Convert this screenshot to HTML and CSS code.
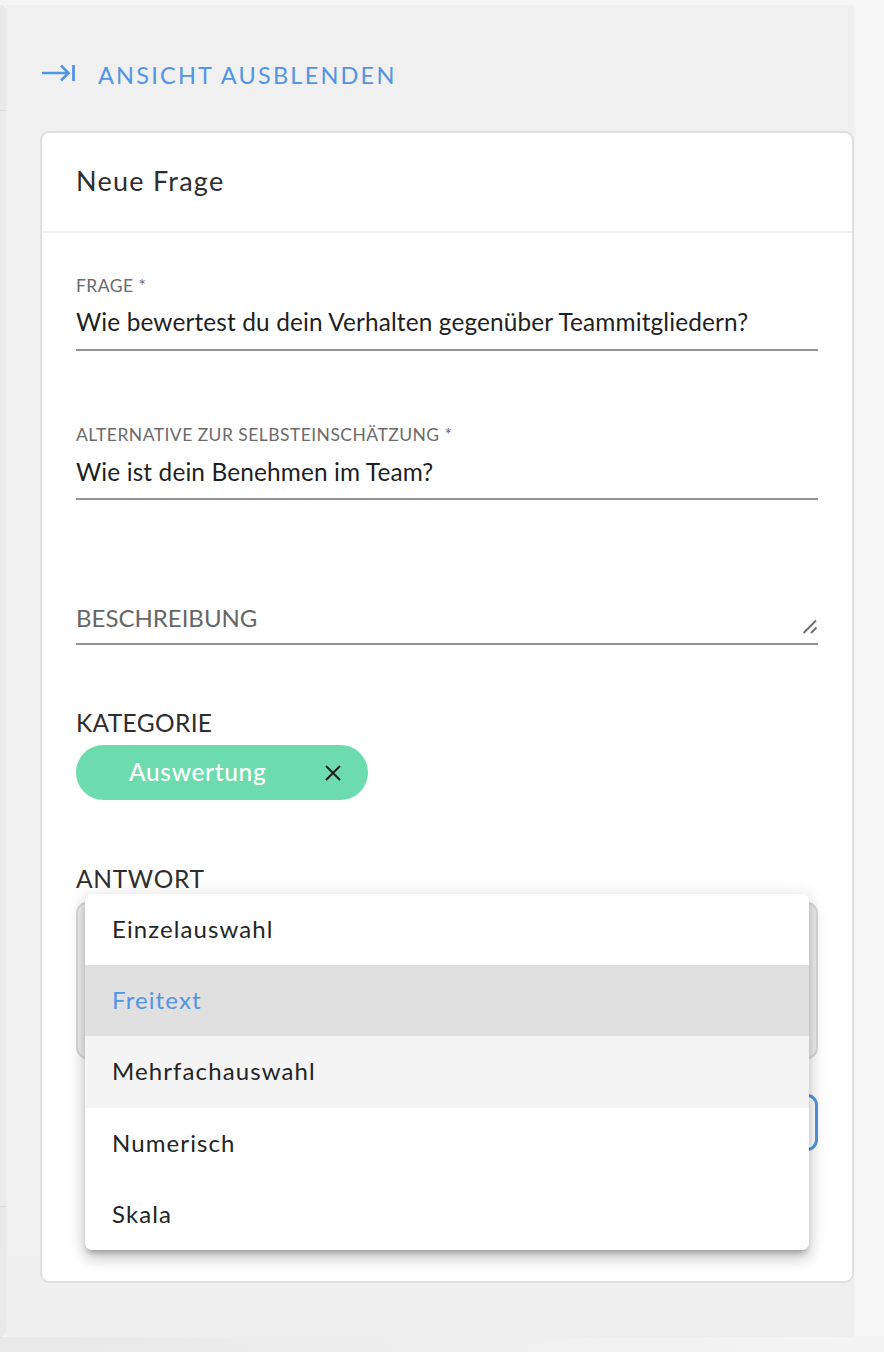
FILE: index.html
```html
<!DOCTYPE html>
<html lang="de">
<head>
<meta charset="utf-8">
<title>Neue Frage</title>
<link rel="stylesheet" href="styles.css">
</head>
<body>
<div class="page">
  <div class="sliver"><div class="sliver-top"></div><div class="sliver-mid"></div><div class="sliver-bot"></div></div>
  <main class="panel">
    <button class="hide-btn" type="button">
      <svg class="hide-icon" width="34" height="20" viewBox="0 0 34 20" fill="none" stroke="#5294e6" stroke-width="2.5"><path d="M1 10H27.5M20 2.5L27.5 10L20 17.5"/><path d="M32.5 2V18" stroke-width="2.8"/></svg>
      <span>ANSICHT AUSBLENDEN</span>
    </button>
    <section class="card">
      <header class="card-head">Neue Frage</header>
      <div class="card-body">
        <div class="field first">
          <label class="small-label">FRAGE *</label>
          <div class="value">Wie bewertest du dein Verhalten gegenüber Teammitgliedern?</div>
        </div>
        <div class="field second">
          <label class="small-label">ALTERNATIVE ZUR SELBSTEINSCHÄTZUNG *</label>
          <div class="value">Wie ist dein Benehmen im Team?</div>
        </div>
        <div class="field third">
          <div class="placeholder">BESCHREIBUNG</div>
          <svg class="resize" width="16" height="16" viewBox="0 0 16 16" stroke="#6f6f6f" stroke-width="2" fill="none"><path d="M1.5 14L14 1.5M9 14L14.5 8.5"/></svg>
        </div>
        <h3 class="section-label kat">KATEGORIE</h3>
        <div class="chip"><span class="chip-text">Auswertung</span>
          <svg class="chip-x" width="16" height="16" viewBox="0 0 16 16" stroke="#1c1c1c" stroke-width="2" fill="none"><path d="M1 1L15 15M15 1L1 15"/></svg>
        </div>
        <h3 class="section-label ant">ANTWORT</h3>
        <div class="answer-box"></div>
        <div class="blue-btn"></div>
      </div>
    </section>
  </main>
  <ul class="menu">
    <li>Einzelauswahl</li>
    <li class="selected">Freitext</li>
    <li class="hovered">Mehrfachauswahl</li>
    <li>Numerisch</li>
    <li>Skala</li>
  </ul>
</div>
</body>
</html>
```
FILE: styles.css
```css
* { box-sizing: border-box; }
html, body { margin: 0; height: 100%; }
body {
  background: linear-gradient(90deg, #e9e9e9, #f4f4f4) bottom / 100% 15px no-repeat, #f5f5f5;
  font-family: "Lato", "Noto Sans", sans-serif;
  color: #2e2e2e;
  overflow: hidden;
}
.page {
  position: relative;
  display: flex;
  width: 884px;
  height: 1352px;
  padding-top: 5px;
  align-items: flex-start;
}
.sliver {
  width: 6px;
  height: 1332px;
  display: flex;
  flex-direction: column;
  background: #e9e9e9;
  border-radius: 0 5px 5px 0;
  flex: none;
}
.sliver-top { height: 106px; border-bottom: 1px solid #dcdcdc; }
.sliver-mid { height: 1096px; border-bottom: 1px solid #dcdcdc; background: #ebebeb; }
.sliver-bot { flex: 1; }
.panel {
  width: 848px;
  height: 1332px;
  background: linear-gradient(180deg, #f0f0f0 92%, #eeeeee 100%);
  padding-top: 50px;
  padding-left: 34px;
  flex: none;
}
.hide-btn {
  display: flex;
  align-items: center;
  gap: 23px;
  height: 40px;
  margin-left: 1px;
  padding: 0;
  border: 0;
  background: none;
  font: inherit;
  font-size: 23.5px;
  letter-spacing: 2.2px;
  color: #5294e6;
}
.hide-icon { margin-top: -5px; flex: none; }
.card {
  margin-top: 36px;
  width: 814px;
  height: 1152px;
  background: #fff;
  border: 2px solid #dfdfdf;
  border-radius: 9px;
}
.card-head {
  height: 100px;
  padding: 32px 0 0 34px;
  font-size: 27px;
  line-height: 32px;
  letter-spacing: 1.25px;
  color: #2e2e2e;
  border-bottom: 2px solid #efefef;
}
.card-body { padding: 0 34px; }
.field { position: relative; width: 742px; border-bottom: 2px solid #949494; }
.first { margin-top: 41px; height: 77px; }
.second { margin-top: 72px; height: 77px; }
.third { margin-top: 71px; height: 74px; }
.small-label {
  display: block;
  font-size: 17.5px;
  line-height: 24px;
  color: #6b6b6b;
  letter-spacing: 0.45px;
}
.value {
  margin-top: 7px;
  font-size: 24.4px;
  line-height: 34px;
  letter-spacing: 0.13px;
  color: #1f1f1f;
}
.second .value { margin-top: 8px; }
.placeholder {
  padding-top: 30px;
  font-size: 24px;
  line-height: 34px;
  color: #666;
}
.resize { position: absolute; right: 0; bottom: 8px; }
.section-label {
  margin: 0;
  font-weight: 400;
  font-size: 24.5px;
  line-height: 32px;
  letter-spacing: 0.7px;
  color: #2e2e2e;
}
.kat { margin-top: 62px; letter-spacing: 0.35px; }
.chip {
  margin-top: 6px;
  width: 292px;
  height: 55px;
  border-radius: 28px;
  background: #6cdbad;
  display: flex;
  align-items: center;
  padding: 0 0 0 53px;
}
.chip-text { color: #fff; font-size: 24.4px; line-height: 30px; margin-top: -2px; letter-spacing: 0.7px; width: 196px; flex: none; font-weight: 500; }
.chip-x { flex: none; }
.ant { margin-top: 63px; }
.answer-box {
  margin-top: 7px;
  width: 742px;
  height: 157px;
  background: #eee;
  border: 2px solid #d9d9d9;
  border-radius: 11px;
}
.blue-btn {
  margin: 35px 0 0 auto;
  width: 300px;
  height: 57px;
  border: 3px solid #5294e6;
  border-radius: 11px;
}
.menu {
  position: absolute;
  left: 85px;
  top: 894px;
  width: 724px;
  height: 356px;
  margin: 0;
  padding: 0;
  list-style: none;
  background: #fff;
  border-radius: 7px;
  overflow: hidden;
  box-shadow: 0 5px 6px -3px rgba(0,0,0,.3), 0 9px 14px 1px rgba(0,0,0,.12), 0 3px 18px 3px rgba(0,0,0,.1);
}
.menu li {
  height: 71.2px;
  display: flex;
  align-items: center;
  padding: 0 0 2px 27px;
  font-size: 24px;
  letter-spacing: 1.1px;
  color: #242424;
}
.menu .selected { background: #e0e0e0; color: #5294e6; }
.menu .hovered { background: #f4f4f4; }
```
